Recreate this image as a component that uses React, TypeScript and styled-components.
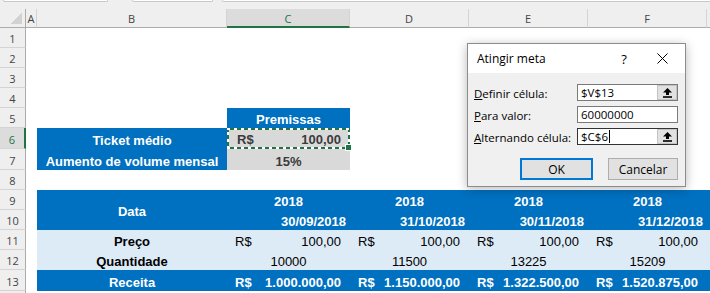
import { Fragment } from 'react';
import styled, { createGlobalStyle } from 'styled-components';

const GlobalStyle = createGlobalStyle`
  html, body { margin: 0; padding: 0; background: #fff; overflow: hidden; }
  * { box-sizing: border-box; }
`;

const BLUE = '#0070c0';
const LIGHT = '#ddebf7';
const GREY = '#d9d9d9';
const GREEN = '#217346';

const Page = styled.div`
  position: relative;
  width: 710px;
  height: 293px;
  overflow: hidden;
  background: #fff;
`;

const TopStrip = styled.div`
  height: 9px;
  background: #efefef;
  display: flex;
  align-items: flex-start;
`;

const BoxEdge = styled.div<{ $gap: number; $width?: number }>`
  margin-left: ${(p) => p.$gap}px;
  width: ${(p) => (p.$width ? `${p.$width}px` : 'auto')};
  flex: ${(p) => (p.$width ? 'none' : '1')};
  margin-right: ${(p) => (p.$width ? '0' : '-6px')};
  height: 2px;
  background: #fff;
  border: 1px solid #c8c8c8;
  border-top: none;
  border-radius: 0 0 3px 3px;
`;

const Sheet = styled.div`
  display: grid;
  grid-template-columns: 26px 11px 190px 123px 119px 119px 119px 1fr;
  grid-template-rows: 19px repeat(5, 20px) 21px 21px 20px repeat(4, 20px) 21px 20px;
  font-family: 'Liberation Sans', Arial, sans-serif;
`;

const Corner = styled.div`
  grid-column: 1;
  grid-row: 1;
  background: #efefef linear-gradient(135deg, transparent 50%, #d2d2d2 50%) no-repeat right 3px bottom 3px / 11px 11px;
  border-right: 1px solid #ababab;
  border-bottom: 1px solid #ababab;
`;

const ColHead = styled.div<{ $col: number; $sel?: boolean }>`
  grid-column: ${(p) => p.$col};
  grid-row: 1;
  display: flex;
  align-items: center;
  justify-content: center;
  font-family: 'Open Sans', 'Noto Sans', sans-serif;
  font-size: 11px;
  padding-top: 1px;
  color: ${(p) => (p.$sel ? GREEN : '#444')};
  background: ${(p) => (p.$sel ? '#dcdcdc' : '#efefef')};
  border-right: 1px solid #d4d4d4;
  border-bottom: ${(p) => (p.$sel ? `2px solid ${GREEN}` : '1px solid #ababab')};
`;

const RowHead = styled.div<{ $row: number; $sel?: boolean }>`
  grid-column: 1;
  grid-row: ${(p) => p.$row};
  display: flex;
  align-items: center;
  justify-content: center;
  font-family: 'Open Sans', 'Noto Sans', sans-serif;
  font-size: 11px;
  padding-top: 2px;
  color: ${(p) => (p.$sel ? GREEN : '#444')};
  background: ${(p) => (p.$sel ? '#dcdcdc' : '#efefef')};
  border-bottom: 1px solid #d4d4d4;
  border-right: ${(p) => (p.$sel ? `2px solid ${GREEN}` : '1px solid #ababab')};
`;

type Align = 'left' | 'center' | 'right';

const Cell = styled.div<{
  $col: number;
  $row: number;
  $span?: number;
  $bg?: string;
  $color?: string;
  $bold?: boolean;
  $align?: Align;
}>`
  grid-column: ${(p) => p.$col};
  grid-row: ${(p) => p.$row} / span ${(p) => p.$span ?? 1};
  background: ${(p) => p.$bg ?? 'transparent'};
  color: ${(p) => p.$color ?? '#000'};
  font-weight: ${(p) => (p.$bold ? 700 : 400)};
  font-size: 13px;
  display: flex;
  align-items: center;
  justify-content: ${(p) => (p.$align === 'left' ? 'flex-start' : p.$align === 'right' ? 'flex-end' : 'center')};
  padding: 3px 4px 0;
  white-space: nowrap;
`;

const Money = styled(Cell)`
  justify-content: space-between;
  padding: 3px 9px 0 8px;
`;

const Copied = styled(Money)`
  position: relative;
  border: 2px solid ${GREEN};
  padding: 2px 7px 0 8px;

  &::before {
    content: '';
    position: absolute;
    inset: -2px;
    pointer-events: none;
    background:
      repeating-linear-gradient(90deg, #fff 0 3px, transparent 3px 7px) top left / 100% 2px no-repeat,
      repeating-linear-gradient(90deg, #fff 0 3px, transparent 3px 7px) bottom left / 100% 2px no-repeat,
      repeating-linear-gradient(0deg, #fff 0 3px, transparent 3px 7px) top left / 2px 100% no-repeat,
      repeating-linear-gradient(0deg, #fff 0 3px, transparent 3px 7px) top right / 2px 100% no-repeat;
  }

  &::after {
    content: '';
    position: absolute;
    right: -4px;
    bottom: -4px;
    width: 5px;
    height: 5px;
    background: ${GREEN};
    border: 1px solid #fff;
  }
`;

/* ---------- dialog ---------- */

const Dialog = styled.div`
  position: absolute;
  left: 467px;
  top: 43px;
  width: 219px;
  height: 144px;
  border: 1px solid #8c8c8c;
  background: #f0f0f0;
  box-shadow: 0 2px 10px rgba(0, 0, 0, 0.28);
  font-family: 'Open Sans', 'Noto Sans', sans-serif;
  font-size: 11.5px;
  color: #000;
  display: flex;
  flex-direction: column;
`;

const TitleBar = styled.div`
  height: 29px;
  background: #fff;
  display: flex;
  align-items: center;
  padding-left: 9px;
`;

const Title = styled.div`
  flex: 1;
  font-size: 12px;
`;

const TitleButton = styled.div<{ $w: number }>`
  width: ${(p) => p.$w}px;
  height: 29px;
  display: flex;
  align-items: center;
  justify-content: center;
  font-size: 13px;
`;

const DialogBody = styled.div`
  flex: 1;
  padding: 11px 7px 0 6px;
`;

const FormGrid = styled.div`
  display: grid;
  grid-template-columns: 103px 101px;
  grid-auto-rows: 17px;
  row-gap: 5px;
  align-items: center;
`;

const FieldLabel = styled.div`
  white-space: nowrap;
  padding-top: 1px;
`;

const Field = styled.div<{ $focus?: boolean }>`
  height: 17px;
  background: #fff;
  border: 1px solid ${(p) => (p.$focus ? '#333' : '#7a7a7a')};
  display: flex;
  align-items: center;
  padding-left: 3px;
`;

const FieldText = styled.div`
  flex: 1;
  display: flex;
  align-items: center;
  font-size: 11.5px;
  line-height: 15px;
`;

const Caret = styled.span`
  display: inline-block;
  width: 1px;
  height: 13px;
  background: #000;
  margin-left: 1px;
`;

const RefButton = styled.div`
  width: 20px;
  height: 15px;
  background: #e1e1e1;
  border: 1px solid #c4c4c4;
  display: flex;
  align-items: center;
  justify-content: center;
`;

const ButtonRow = styled.div`
  display: flex;
  justify-content: flex-end;
  gap: 15px;
  margin-top: 13px;
`;

const DlgButton = styled.div<{ $primary?: boolean; $w: number }>`
  width: ${(p) => p.$w}px;
  height: 22px;
  background: #e1e1e1;
  border: ${(p) => (p.$primary ? '2px solid #0078d7' : '1px solid #adadad')};
  display: flex;
  align-items: center;
  justify-content: center;
  font-size: 12px;
`;

function UpArrow() {
  return (
    <svg width="9" height="10" viewBox="0 0 9 10">
      <path d="M4.5 0 L9 4.5 H6 V7 H3 V4.5 H0 Z" fill="#000" />
      <rect x="0" y="8.2" width="9" height="1.6" fill="#000" />
    </svg>
  );
}

function CloseIcon() {
  return (
    <svg width="11" height="11" viewBox="0 0 11 11">
      <path d="M0.5 0.5 L10.5 10.5 M10.5 0.5 L0.5 10.5" stroke="#000" strokeWidth="1" />
    </svg>
  );
}

const cols = ['A', 'B', 'C', 'D', 'E', 'F', 'G'];

const months = [
  { date: '30/09/2018', qty: '10000', rev: '1.000.000,00' },
  { date: '31/10/2018', qty: '11500', rev: '1.150.000,00' },
  { date: '30/11/2018', qty: '13225', rev: '1.322.500,00' },
  { date: '31/12/2018', qty: '15209', rev: '1.520.875,00' },
];

export default function App() {
  return (
    <Page>
      <GlobalStyle />
      <TopStrip>
        <BoxEdge $gap={3} $width={105} />
        <BoxEdge $gap={24} $width={81} />
        <BoxEdge $gap={9} />
      </TopStrip>

      <Sheet>
        <Corner />
        {cols.map((c, i) => (
          <ColHead key={c} $col={i + 2} $sel={c === 'C'}>
            {c !== 'G' ? c : ''}
          </ColHead>
        ))}
        {Array.from({ length: 14 }, (_, i) => (
          <RowHead key={i} $row={i + 2} $sel={i + 1 === 6}>
            {i < 13 ? i + 1 : ''}
          </RowHead>
        ))}

        {/* premissas */}
        <Cell $col={4} $row={6} $bg={BLUE} $color="#fff" $bold>Premissas</Cell>
        <Cell $col={3} $row={7} $bg={BLUE} $color="#fff" $bold>Ticket médio</Cell>
        <Copied $col={4} $row={7} $bg={GREY} $color="#3b3b3b" $bold>
          <span>R$</span>
          <span>100,00</span>
        </Copied>
        <Cell $col={3} $row={8} $bg={BLUE} $color="#fff" $bold>Aumento de volume mensal</Cell>
        <Cell $col={4} $row={8} $bg={GREY} $color="#3b3b3b" $bold>15%</Cell>

        {/* tabela */}
        <Cell $col={3} $row={10} $span={2} $bg={BLUE} $color="#fff" $bold>Data</Cell>
        <Cell $col={3} $row={12} $bg={LIGHT} $bold>Preço</Cell>
        <Cell $col={3} $row={13} $bg={LIGHT} $bold>Quantidade</Cell>
        <Cell $col={3} $row={14} $bg={BLUE} $color="#fff" $bold>Receita</Cell>

        {months.map((m, i) => (
          <Fragment key={m.date}>
            <Cell $col={i + 4} $row={10} $bg={BLUE} $color="#fff" $bold>2018</Cell>
            <Cell $col={i + 4} $row={11} $bg={BLUE} $color="#fff" $bold $align="right">{m.date}</Cell>
            <Money $col={i + 4} $row={12} $bg={LIGHT}>
              <span>R$</span>
              <span>100,00</span>
            </Money>
            <Cell $col={i + 4} $row={13} $bg={LIGHT}>{m.qty}</Cell>
            <Money $col={i + 4} $row={14} $bg={BLUE} $color="#fff" $bold>
              <span>R$</span>
              <span>{m.rev}</span>
            </Money>
          </Fragment>
        ))}
        <Cell $col={8} $row={10} $span={2} $bg={BLUE} />
        <Cell $col={8} $row={12} $span={2} $bg={LIGHT} />
        <Cell $col={8} $row={14} $bg={BLUE} />
      </Sheet>

      <Dialog>
        <TitleBar>
          <Title>Atingir meta</Title>
          <TitleButton $w={30}>?</TitleButton>
          <TitleButton $w={46}>
            <CloseIcon />
          </TitleButton>
        </TitleBar>
        <DialogBody>
          <FormGrid>
            <FieldLabel><u>D</u>efinir célula:</FieldLabel>
            <Field>
              <FieldText>$V$13</FieldText>
              <RefButton><UpArrow /></RefButton>
            </Field>
            <FieldLabel><u>P</u>ara valor:</FieldLabel>
            <Field>
              <FieldText>60000000</FieldText>
            </Field>
            <FieldLabel><u>A</u>lternando célula:</FieldLabel>
            <Field $focus>
              <FieldText>$C$6<Caret /></FieldText>
              <RefButton><UpArrow /></RefButton>
            </Field>
          </FormGrid>
          <ButtonRow>
            <DlgButton $primary $w={73}>OK</DlgButton>
            <DlgButton $w={70}>Cancelar</DlgButton>
          </ButtonRow>
        </DialogBody>
      </Dialog>
    </Page>
  );
}
